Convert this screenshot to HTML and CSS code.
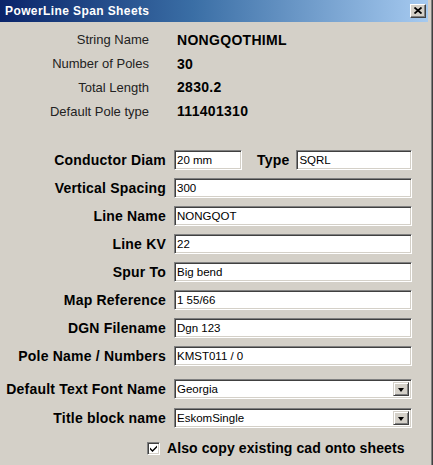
FILE: index.html
```html
<!DOCTYPE html>
<html>
<head>
<meta charset="utf-8">
<link rel="stylesheet" href="styles.css">
</head>
<body>
<div class="window">
  <div class="titlebar">
    <span class="title">PowerLine Span Sheets</span>
    <span class="close-btn"><svg width="8" height="7" viewBox="0 0 8 7"><path d="M0.5 0.5 L7.5 6.5 M7.5 0.5 L0.5 6.5" stroke="#000" stroke-width="1.8" fill="none"/></svg></span>
  </div>
  <div class="content">
    <div class="info">
      <div class="info-label">String Name</div><div class="info-value">NONGQOTHIML</div>
      <div class="info-label">Number of Poles</div><div class="info-value">30</div>
      <div class="info-label">Total Length</div><div class="info-value">2830.2</div>
      <div class="info-label">Default Pole type</div><div class="info-value">111401310</div>
    </div>

    <div class="form">
      <div class="f-label">Conductor Diam</div>
      <div class="f-field split">
        <div class="input small">20 mm</div>
        <div class="f-label type-label">Type</div>
        <div class="input grow">SQRL</div>
      </div>
      <div class="f-label">Vertical Spacing</div><div class="input">300</div>
      <div class="f-label">Line Name</div><div class="input">NONGQOT</div>
      <div class="f-label">Line KV</div><div class="input">22</div>
      <div class="f-label">Spur To</div><div class="input">Big bend</div>
      <div class="f-label">Map Reference</div><div class="input">1 55/66</div>
      <div class="f-label">DGN Filename</div><div class="input">Dgn 123</div>
      <div class="f-label">Pole Name / Numbers</div><div class="input">KMST011 / 0</div>
    </div>

    <div class="form selects">
      <div class="f-label">Default Text Font Name</div>
      <div class="input select"><span class="sel-text">Georgia</span><span class="arrow-btn"><span class="tri"></span></span></div>
      <div class="f-label">Title block name</div>
      <div class="input select"><span class="sel-text">EskomSingle</span><span class="arrow-btn"><span class="tri"></span></span></div>
    </div>

    <div class="check-row">
      <span class="checkbox"><svg width="7" height="7" viewBox="0 0 7 7"><path d="M0 2.5 L2.5 5 L7 0.5 L7 2.5 L2.5 7 L0 4.5 Z" fill="#000"/></svg></span>
      <span class="check-label">Also copy existing cad onto sheets</span>
    </div>
  </div>
</div>
</body>
</html>
```
FILE: styles.css
```css
html, body {
  margin: 0;
  padding: 0;
  background: #d4d0c8;
}
body {
  font-family: "Liberation Sans", Arial, sans-serif;
  color: #000;
}
.window {
  width: 433px;
  height: 465px;
  background: #d4d0c8;
  border-right: 1px solid #404040;
  box-shadow: inset -1px 0 0 #808080;
  padding-right: 2px;
  box-sizing: border-box;
}
.titlebar {
  height: 22px;
  margin-right: 2px;
  background: linear-gradient(to right, #0a246a 0%, #3a6ea5 45%, #a6caf0 100%);
  display: flex;
  align-items: center;
  justify-content: space-between;
  padding-left: 5px;
  padding-right: 2px;
  box-sizing: border-box;
}
.title {
  color: #fff;
  font-weight: bold;
  font-size: 12px;
  letter-spacing: 0.4px;
}
.close-btn {
  width: 16px;
  height: 14px;
  box-sizing: border-box;
  background: #d4d0c8;
  border-top: 1px solid #fff;
  border-left: 1px solid #fff;
  border-right: 1px solid #404040;
  border-bottom: 1px solid #404040;
  box-shadow: inset -1px -1px 0 #808080;
  display: flex;
  align-items: center;
  justify-content: center;
  padding-right: 1px;
  padding-bottom: 1px;
}
.close-btn svg { display: block; }

.content {
  padding-top: 6px;
}
.info {
  display: grid;
  grid-template-columns: 149px auto;
  column-gap: 28px;
  grid-auto-rows: 23.8px;
  align-items: center;
}
.info-label {
  text-align: right;
  font-size: 13px;
  color: #222;
}
.info-value {
  font-size: 14px;
  font-weight: bold;
  letter-spacing: 0.3px;
}

.form {
  display: grid;
  grid-template-columns: 166px 238px;
  column-gap: 8px;
  row-gap: 8px;
  grid-auto-rows: 20px;
  align-items: center;
  margin-top: 27px;
}
.f-label {
  text-align: right;
  font-size: 14px;
  font-weight: bold;
  letter-spacing: 0.2px;
  white-space: nowrap;
}
.split {
  display: flex;
  align-items: center;
  height: 20px;
}
.type-label {
  margin: 0 7px 0 15px;
}
.input {
  height: 20px;
  box-sizing: border-box;
  background: #fff;
  border-top: 1px solid #808080;
  border-left: 1px solid #808080;
  border-right: 1px solid #fff;
  border-bottom: 1px solid #fff;
  box-shadow: inset 1px 1px 0 #404040, inset -1px -1px 0 #d4d0c8;
  font-size: 11.5px;
  line-height: 18px;
  padding-left: 2px;
  white-space: nowrap;
  overflow: hidden;
}
.input.small { width: 68px; flex: none; }
.input.grow { flex: 1; }

.selects {
  margin-top: 13px;
  row-gap: 9px;
}
.select {
  display: flex;
  align-items: stretch;
  padding: 2px 2px 2px 2px;
  line-height: 14px;
}
.sel-text {
  flex: 1;
  line-height: 15px;
}
.arrow-btn {
  width: 16px;
  box-sizing: border-box;
  background: #d4d0c8;
  border-top: 1px solid #d4d0c8;
  border-left: 1px solid #d4d0c8;
  border-right: 1px solid #404040;
  border-bottom: 1px solid #404040;
  box-shadow: inset 1px 1px 0 #fff, inset -1px -1px 0 #808080;
  display: flex;
  align-items: center;
  justify-content: center;
}
.tri {
  width: 0;
  height: 0;
  border-left: 3.5px solid transparent;
  border-right: 3.5px solid transparent;
  border-top: 4px solid #000;
  margin-top: 1px;
}

.check-row {
  display: flex;
  align-items: center;
  margin-top: 13px;
  padding-left: 147px;
  height: 14px;
}
.checkbox {
  width: 13px;
  height: 13px;
  box-sizing: border-box;
  background: #fff;
  border-top: 1px solid #808080;
  border-left: 1px solid #808080;
  border-right: 1px solid #fff;
  border-bottom: 1px solid #fff;
  box-shadow: inset 1px 1px 0 #404040, inset -1px -1px 0 #d4d0c8;
  display: flex;
  align-items: center;
  justify-content: center;
}
.checkbox svg { display: block; }
.check-label {
  margin-left: 7px;
  font-size: 14px;
  font-weight: bold;
  letter-spacing: 0.1px;
}
```
